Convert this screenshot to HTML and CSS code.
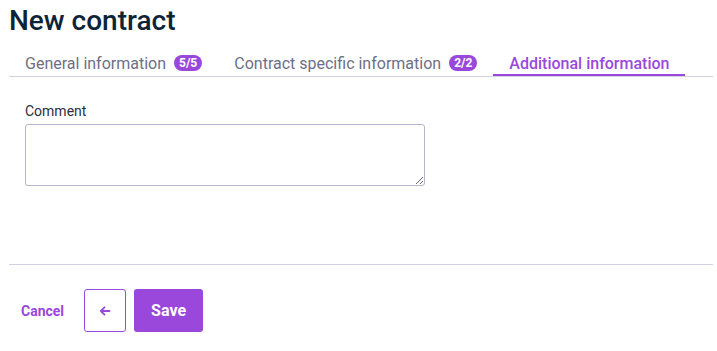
FILE: index.html
```html
<!DOCTYPE html>
<html>
<head>
<meta charset="utf-8">
<link rel="stylesheet" href="styles.css">
</head>
<body>
<div class="page">
  <h1 class="title">New contract</h1>
  <div class="tabs">
    <div class="tab">General information <span class="badge">5/5</span></div>
    <div class="tab">Contract specific information <span class="badge">2/2</span></div>
    <div class="tab active">Additional information</div>
  </div>
  <div class="content">
    <label class="label" for="comment">Comment</label>
    <textarea id="comment" class="textarea"></textarea>
  </div>
  <div class="footer">
    <button class="cancel">Cancel</button>
    <button class="back" aria-label="Back">
      <svg width="12" height="12" viewBox="0 0 12 12"><path d="M10.5 6H2M5.5 2.3L1.8 6l3.7 3.7" fill="none" stroke="#9a48dc" stroke-width="1.8" stroke-linecap="round" stroke-linejoin="round"/></svg>
    </button>
    <button class="save">Save</button>
  </div>
</div>
</body>
</html>
```
FILE: styles.css
```css
* { box-sizing: border-box; }
body {
  margin: 0;
  font-family: Roboto, "Liberation Sans", sans-serif;
  background: #fff;
}
.page {
  padding: 0 4px 0 9px;
}
.title {
  margin: 0;
  padding-top: 4px;
  font-size: 28px;
  line-height: 34px;
  font-weight: 500;
  color: #0d2437;
}
.tabs {
  display: flex;
  margin-top: 12px;
  border-bottom: 1px solid #d3d0e2;
}
.tab {
  display: flex;
  align-items: center;
  gap: 8px;
  padding: 2px 16px 0;
  height: 26px;
  font-size: 16px;
  color: #6c7087;
  border-bottom: 2px solid transparent;
}
.tab.active {
  color: #9a48dc;
  font-weight: 500;
  border-bottom-color: #9a48dc;
}
.badge {
  display: inline-flex;
  align-items: center;
  justify-content: center;
  height: 16px;
  padding: 0 5px;
  border-radius: 8px;
  background: #9a48dc;
  color: #fff;
  font-size: 12px;
  font-weight: 700;
}
.content {
  padding: 25px 16px 0;
  height: 188px;
  border-bottom: 1px solid #d3d0e2;
}
.label {
  display: block;
  font-size: 14px;
  line-height: 18px;
  color: #2b2f3a;
  margin-bottom: 4px;
}
.textarea {
  display: block;
  width: 400px;
  height: 62px;
  border: 1px solid #b7b4cb;
  border-radius: 3px;
  resize: vertical;
  font-family: inherit;
}
.footer {
  display: flex;
  align-items: center;
  padding: 24px 0 0 12px;
  gap: 8px;
}
.cancel {
  background: none;
  border: 0;
  padding: 0;
  margin-right: 12px;
  font-family: inherit;
  font-size: 14px;
  font-weight: 700;
  color: #9a48dc;
}
.back {
  width: 42px;
  height: 43px;
  display: flex;
  align-items: center;
  justify-content: center;
  background: #fff;
  border: 1px solid #9a48dc;
  border-radius: 3px;
  padding: 0;
}
.save {
  width: 69px;
  height: 43px;
  background: #9a48dc;
  color: #fff;
  border: 0;
  border-radius: 3px;
  font-family: inherit;
  font-size: 16px;
  font-weight: 700;
}
```
